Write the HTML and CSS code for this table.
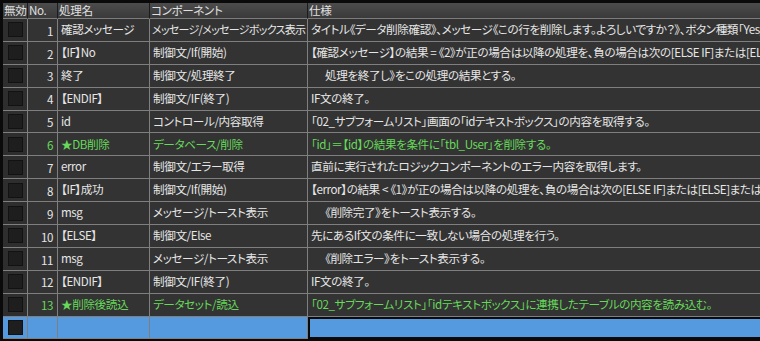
FILE: index.html
```html
<!DOCTYPE html>
<html lang="ja">
<head>
<meta charset="utf-8">
<link rel="stylesheet" href="styles.css">
</head>
<body>
<div class="grid">
  <div class="hd">無効</div><div class="hd">No.</div><div class="hd">処理名</div><div class="hd">コンポーネント</div><div class="hd last">仕様</div>

  <div class="c chk"><span class="box"></span></div><div class="c num">1</div><div class="c">確認メッセージ</div><div class="c tight">メッセージ/メッセージボックス表示</div><div class="c">タイトル《データ削除確認》、メッセージ《この行を削除します。よろしいですか？》、ボタン種類「Yes/No」</div>

  <div class="c chk"><span class="box"></span></div><div class="c num">2</div><div class="c">【IF】No</div><div class="c">制御文/If(開始)</div><div class="c">【確認メッセージ】の結果 = 《2》が正の場合は以降の処理を、負の場合は次の[ELSE IF]または[ELSE]</div>

  <div class="c chk"><span class="box"></span></div><div class="c num">3</div><div class="c">終了</div><div class="c">制御文/処理終了</div><div class="c"><span class="ind"></span>処理を終了し》をこの処理の結果とする。</div>

  <div class="c chk"><span class="box"></span></div><div class="c num">4</div><div class="c">【ENDIF】</div><div class="c">制御文/IF(終了)</div><div class="c">IF文の終了。</div>

  <div class="c chk"><span class="box"></span></div><div class="c num">5</div><div class="c">id</div><div class="c">コントロール/内容取得</div><div class="c">「02_サブフォームリスト」画面の「idテキストボックス」の内容を取得する。</div>

  <div class="c chk"><span class="box"></span></div><div class="c num g">6</div><div class="c g">★DB削除</div><div class="c g">データベース/削除</div><div class="c g">「id」＝【id】の結果を条件に「tbl_User」を削除する。</div>

  <div class="c chk"><span class="box"></span></div><div class="c num">7</div><div class="c">error</div><div class="c">制御文/エラー取得</div><div class="c">直前に実行されたロジックコンポーネントのエラー内容を取得します。</div>

  <div class="c chk"><span class="box"></span></div><div class="c num">8</div><div class="c">【IF】成功</div><div class="c">制御文/If(開始)</div><div class="c">【error】の結果 &lt; 《1》が正の場合は以降の処理を、負の場合は次の[ELSE IF]または[ELSE]または[ENDIF]</div>

  <div class="c chk"><span class="box"></span></div><div class="c num">9</div><div class="c">msg</div><div class="c">メッセージ/トースト表示</div><div class="c"><span class="ind"></span>《削除完了》をトースト表示する。</div>

  <div class="c chk"><span class="box"></span></div><div class="c num">10</div><div class="c">【ELSE】</div><div class="c">制御文/Else</div><div class="c">先にあるIf文の条件に一致しない場合の処理を行う。</div>

  <div class="c chk"><span class="box"></span></div><div class="c num">11</div><div class="c">msg</div><div class="c">メッセージ/トースト表示</div><div class="c"><span class="ind"></span>《削除エラー》をトースト表示する。</div>

  <div class="c chk"><span class="box"></span></div><div class="c num">12</div><div class="c">【ENDIF】</div><div class="c">制御文/IF(終了)</div><div class="c">IF文の終了。</div>

  <div class="c chk"><span class="box"></span></div><div class="c num g">13</div><div class="c g">★削除後読込</div><div class="c g">データセット/読込</div><div class="c g">「02_サブフォームリスト」「idテキストボックス」に連携したテーブルの内容を読み込む。</div>

  <div class="c chk sel"><span class="box"></span></div><div class="c sel"></div><div class="c sel"></div><div class="c sel"></div><div class="c sel focus"></div>
</div>
</body>
</html>
```

FILE: styles.css
```css
html, body {
  margin: 0;
  padding: 0;
  background: #0a0a0a;
  width: 760px;
  height: 341px;
  overflow: hidden;
}
body {
  padding: 3px 0 0 3px;
  box-sizing: border-box;
  font-family: "Noto Sans CJK JP", "Noto Sans", sans-serif;
  font-size: 11.6px;
  letter-spacing: -0.4px;
  font-feature-settings: "palt";
  color: #e6e6e6;
}
.grid {
  display: grid;
  grid-template-columns: 25px 30px 92px 158px 452px;
  grid-template-rows: 16px repeat(14, 22.9px);
  background: #333333;
}
.hd {
  background: linear-gradient(#4c4c4c, #3a3a3a);
  border-right: 1px solid #1c1c1c;
  border-bottom: 1px solid #7c7c7c;
  padding-left: 1px;
  display: flex;
  align-items: center;
  white-space: nowrap;
  overflow: hidden;
  color: #e0e0e0;
  line-height: 1;
}
.hd.last { border-right: none; }
.c {
  border-right: 1px solid #7f7f7f;
  border-bottom: 1px solid #7f7f7f;
  padding-left: 3px;
  display: flex;
  align-items: center;
  white-space: nowrap;
  overflow: hidden;
  line-height: 1;
  min-width: 0;
}
.c:nth-child(5n) { border-right: none; }
.tight {
  font-size: 11px;
  letter-spacing: -0.7px;
  padding-left: 2px;
}
.num {
  justify-content: flex-end;
  padding: 3px 4px 0 0;
}
.chk {
  justify-content: center;
  padding: 0;
  background: #2e2e2e;
}
.box {
  width: 13px;
  height: 13px;
  background: #1e1e1e;
  border: 1px solid #121212;
}
.g { color: #66d95a; }
.ind {
  display: inline-block;
  width: 14px;
}
.sel {
  background: #5599de;
}
.chk.sel { background: #5599de; }
.focus {
  border: 2px solid #0a0a0a;
  border-right-width: 1px;
}
```
